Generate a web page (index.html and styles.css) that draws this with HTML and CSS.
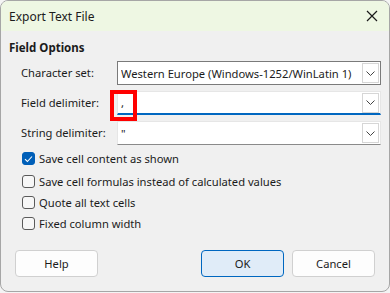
FILE: index.html
```html
<!DOCTYPE html>
<html>
<head>
<meta charset="utf-8">
<link rel="stylesheet" href="styles.css">
</head>
<body>
<div class="window">
  <div class="titlebar">
    <span class="title">Export Text File</span>
    <svg class="close" width="12" height="12" viewBox="0 0 12 12"><path d="M1 1L11 11M11 1L1 11" stroke="#1a1a1a" stroke-width="1.2" fill="none"/></svg>
  </div>
  <div class="content">
    <div class="section">Field Options</div>
    <div class="form">
      <div class="label">Character set:</div>
      <div class="combo combo-main">
        <span class="value">Western Europe (Windows-1252/WinLatin 1)</span>
        <span class="dd"><svg width="9" height="5" viewBox="0 0 9 5"><path d="M0.5 0.5L4.5 4.5L8.5 0.5" stroke="#444" fill="none"/></svg></span>
      </div>
      <div class="label">Field delimiter:</div>
      <div class="combo combo-edit focused">
        <span class="value">,</span>
        <span class="dd"><svg width="9" height="5" viewBox="0 0 9 5"><path d="M0.5 0.5L4.5 4.5L8.5 0.5" stroke="#444" fill="none"/></svg></span>
        <span class="highlight"></span>
      </div>
      <div class="label">String delimiter:</div>
      <div class="combo combo-edit">
        <span class="value">"</span>
        <span class="dd"><svg width="9" height="5" viewBox="0 0 9 5"><path d="M0.5 0.5L4.5 4.5L8.5 0.5" stroke="#444" fill="none"/></svg></span>
      </div>
    </div>
    <div class="checks">
      <div class="check first"><span class="box checked"><svg width="9" height="8" viewBox="0 0 9 8"><path d="M1 4.2L3.4 6.5L8 1.5" stroke="#fff" stroke-width="1.1" fill="none"/></svg></span>Save cell content as shown</div>
      <div class="check"><span class="box"></span>Save cell formulas instead of calculated values</div>
      <div class="check"><span class="box"></span>Quote all text cells</div>
      <div class="check"><span class="box"></span>Fixed column width</div>
    </div>
    <div class="buttons">
      <button class="btn">Help</button>
      <span class="spacer"></span>
      <button class="btn primary">OK</button>
      <button class="btn">Cancel</button>
    </div>
  </div>
</div>
</body>
</html>
```
FILE: styles.css
```css
* { box-sizing: border-box; }
html, body { margin: 0; padding: 0; }
body {
  background: #f4f4f4;
  width: 390px;
  height: 293px;
  overflow: hidden;
  font-family: "Noto Sans", "Open Sans", sans-serif;
  font-size: 11.2px;
  color: #1b1b1b;
}
.window {
  width: 390px;
  height: 292px;
  border: 1px solid #a6a6a6;
  border-radius: 8px;
  background: #f0f0f0;
  overflow: hidden;
  display: flex;
  flex-direction: column;
}
.titlebar {
  height: 30px;
  background: #eef7e3;
  display: flex;
  align-items: center;
  justify-content: space-between;
  padding: 0 8px 0 8px;
  flex: none;
}
.title { font-size: 12px; }
.close { margin-right: 3px; }
.content {
  flex: 1;
  display: flex;
  flex-direction: column;
  padding: 8px 8px 0 8px;
}
.section {
  font-weight: bold;
  font-size: 11.5px;
  height: 17px;
  line-height: 17px;
}
.form {
  display: grid;
  grid-template-columns: 96px 264px;
  grid-auto-rows: 24px;
  row-gap: 6px;
  padding-left: 12px;
  margin-top: 5px;
  align-items: center;
}
.label { line-height: 24px; }
.combo {
  position: relative;
  height: 24px;
  background: #fff;
  display: flex;
  align-items: center;
  padding-left: 3px;
}
.combo-main { border: 1px solid #7a7a7a; }
.combo-edit { border: 1px solid #e6e6e6; border-bottom-color: #8a8a8a; }
.combo-edit.focused { border-bottom: 2px solid #0067c0; }
.value { flex: 1; white-space: nowrap; overflow: hidden; }
.dd {
  width: 17px;
  height: 20px;
  margin-right: 1px;
  border: 1px solid #d6d6d6;
  background: #fff;
  display: flex;
  align-items: center;
  justify-content: center;
}
.highlight {
  position: absolute;
  left: -8px;
  top: -2px;
  width: 27px;
  height: 31px;
  border: 4px solid #ff0000;
}
.checks {
  display: flex;
  flex-direction: column;
  gap: 8px;
  padding-left: 13px;
  margin-top: 7px;
}
.check {
  display: flex;
  align-items: center;
  height: 13px;
  line-height: 13px;
}
.check.first { margin-bottom: 2px; }
.box {
  width: 13px;
  height: 13px;
  border: 1px solid #5a5a5a;
  border-radius: 3px;
  margin-right: 4px;
  display: flex;
  align-items: center;
  justify-content: center;
  background: #f7f7f7;
}
.box.checked { background: #005fb8; border-color: #005fb8; }
.buttons {
  display: flex;
  margin-top: auto;
  margin-bottom: 14px;
  padding: 0 6px;
  gap: 8px;
}
.spacer { flex: 1; }
.btn {
  width: 83px;
  height: 27px;
  border: 1px solid #d0d0d0;
  border-radius: 4px;
  background: #fdfdfd;
  font-family: "Noto Sans", "Open Sans", sans-serif;
  font-size: 11.2px;
  color: #1b1b1b;
  padding: 0;
}
.btn.primary { background: #e0ecf8; border-color: #0067c0; }
```
